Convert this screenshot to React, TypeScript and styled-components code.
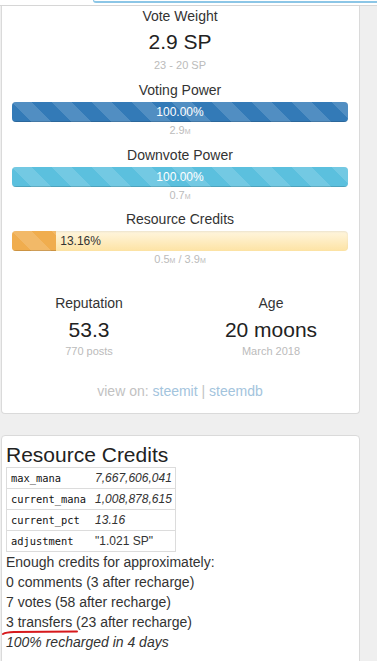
import styled, { createGlobalStyle } from 'styled-components';

const GlobalStyle = createGlobalStyle`
  html, body {
    margin: 0;
    padding: 0;
    background: #efefef;
  }
  body {
    font-family: "Liberation Sans", Arial, sans-serif;
    font-size: 14px;
    color: #333;
  }
`;

const Page = styled.div`
  width: 377px;
  height: 661px;
  overflow: hidden;
  background: #efefef;
`;

const TopStrip = styled.div`
  height: 5px;
  background: #fff;
  border-bottom: 1px solid #d6d6d6;
  display: flex;
  padding-left: 93px;
`;

const SearchEdge = styled.div`
  flex: 1;
  height: 1px;
  border-left: 1px solid #8cc6e6;
  border-bottom: 2px solid #8cc6e6;
  border-bottom-left-radius: 5px;
`;

const Card = styled.section<{ $cut?: boolean }>`
  box-sizing: border-box;
  width: 359px;
  margin-left: 1px;
  background: #fff;
  border: 1px solid #dadada;
  border-top: ${({ $cut }) => ($cut ? 'none' : '1px solid #dadada')};
  border-radius: ${({ $cut }) => ($cut ? '0 0 4px 4px' : '4px 4px 0 0')};
`;

const StatsCard = styled(Card)`
  padding: 0 11px 12px 10px;
  text-align: center;
`;

const Label = styled.div`
  font-size: 14px;
  line-height: 20px;
  color: #333;
`;

const BigValue = styled.div`
  margin-top: 3px;
  font-size: 21px;
  line-height: 26px;
  color: #222;
`;

const Sub = styled.div`
  height: 16px;
  font-size: 11px;
  line-height: 16px;
  color: #bbb;
`;

const Unit = styled.span`
  font-size: 7px;
  line-height: 1;
`;

const Gauge = styled.div<{ $gap: number }>`
  margin-top: ${({ $gap }) => $gap}px;
`;

const Track = styled.div<{ $bg: string }>`
  margin-top: 2px;
  height: 20px;
  border-radius: 4px;
  overflow: hidden;
  display: flex;
  align-items: center;
  background: ${({ $bg }) => $bg};
  box-shadow: inset 0 1px 2px rgba(0, 0, 0, 0.08);
`;

const Fill = styled.div<{ $color: string }>`
  height: 100%;
  flex-shrink: 0;
  display: flex;
  align-items: center;
  justify-content: center;
  background-color: ${({ $color }) => $color};
  background-image: linear-gradient(
    45deg,
    rgba(255, 255, 255, 0.15) 25%,
    transparent 25%,
    transparent 50%,
    rgba(255, 255, 255, 0.15) 50%,
    rgba(255, 255, 255, 0.15) 75%,
    transparent 75%,
    transparent
  );
  background-size: 40px 40px;
  box-shadow: inset 0 -1px 0 rgba(0, 0, 0, 0.15);
`;

const BarText = styled.span<{ $inside: boolean }>`
  font-size: 12px;
  line-height: 20px;
  color: ${({ $inside }) => ($inside ? '#fff' : '#333')};
  padding-left: ${({ $inside }) => ($inside ? '0' : '4px')};
`;

const Columns = styled.div`
  margin: 26px -14px 0;
  display: grid;
  grid-template-columns: 1fr 1fr;
`;

const Column = styled.div`
  text-align: center;
`;

const ColValue = styled(BigValue)`
  margin-top: 4px;
`;

const ViewOn = styled.div`
  margin-top: 22px;
  font-size: 14px;
  line-height: 20px;
  color: #c2c2c2;
`;

const Link = styled.a`
  color: #a3c4dd;
  text-decoration: none;
`;

const CreditsCard = styled(Card)`
  margin-top: 21px;
  padding: 0 4px 20px;
`;

const Heading = styled.h3`
  margin: 6px 0 0;
  font-size: 21px;
  font-weight: normal;
  line-height: 25px;
  color: #222;
`;

const ManaTable = styled.table`
  border-collapse: collapse;
  border: 1px solid #dcdcdc;
`;

const KeyCell = styled.td`
  height: 20px;
  padding: 0 5px 0 4px;
  border-top: 1px solid #dcdcdc;
  font-family: "DejaVu Sans Mono", "Liberation Mono", monospace;
  font-size: 10.4px;
  color: #111;
`;

const ValueCell = styled.td<{ $italic: boolean }>`
  height: 20px;
  padding: 0 3px 0 4px;
  border-top: 1px solid #dcdcdc;
  font-size: 12px;
  font-style: ${({ $italic }) => ($italic ? 'italic' : 'normal')};
  color: #333;
`;

const Line = styled.div<{ $italic?: boolean }>`
  font-size: 14px;
  line-height: 20px;
  color: #333;
  font-style: ${({ $italic }) => ($italic ? 'italic' : 'normal')};
`;

const Marked = styled.span`
  position: relative;
`;

const Scribble = styled.svg`
  position: absolute;
  left: -4px;
  top: 16px;
  width: 76px;
  height: 6px;
  overflow: visible;
`;

type BarProps = { pct: number; color: string; bg: string };

const Bar = ({ pct, color, bg }: BarProps) => {
  const inside = pct >= 50;
  const text = pct.toFixed(2) + '%';
  return (
    <Track $bg={bg}>
      <Fill $color={color} style={{ width: `${pct}%` }}>
        {inside && <BarText $inside>{text}</BarText>}
      </Fill>
      {!inside && <BarText $inside={false}>{text}</BarText>}
    </Track>
  );
};

const mana = [
  { key: 'max_mana', value: '7,667,606,041', italic: true },
  { key: 'current_mana', value: '1,008,878,615', italic: true },
  { key: 'current_pct', value: '13.16', italic: true },
  { key: 'adjustment', value: '"1.021 SP"', italic: false },
];

const App = () => {
  return (
    <Page>
      <GlobalStyle />
      <TopStrip>
        <SearchEdge />
      </TopStrip>

      <StatsCard $cut>
        <Label>Vote Weight</Label>
        <BigValue>2.9 SP</BigValue>
        <Sub style={{ marginTop: 2 }}>23 - 20 SP</Sub>

        <Gauge $gap={7}>
          <Label>Voting Power</Label>
          <Bar pct={100} color="#337ab7" bg="#f5f5f5" />
          <Sub>
            2.9<Unit>M</Unit>
          </Sub>
        </Gauge>

        <Gauge $gap={7}>
          <Label>Downvote Power</Label>
          <Bar pct={100} color="#5bc0de" bg="#f5f5f5" />
          <Sub>
            0.7<Unit>M</Unit>
          </Sub>
        </Gauge>

        <Gauge $gap={6}>
          <Label>Resource Credits</Label>
          <Bar
            pct={13.16}
            color="#f0ad4e"
            bg="linear-gradient(to bottom, #fff6df, #fde3a4)"
          />
          <Sub>
            0.5<Unit>M</Unit> / 3.9<Unit>M</Unit>
          </Sub>
        </Gauge>

        <Columns>
          <Column>
            <Label>Reputation</Label>
            <ColValue>53.3</ColValue>
            <Sub>770 posts</Sub>
          </Column>
          <Column>
            <Label>Age</Label>
            <ColValue>20 moons</ColValue>
            <Sub>March 2018</Sub>
          </Column>
        </Columns>

        <ViewOn>
          view on: <Link href="#">steemit</Link> | <Link href="#">steemdb</Link>
        </ViewOn>
      </StatsCard>

      <CreditsCard>
        <Heading>Resource Credits</Heading>
        <ManaTable>
          <tbody>
            {mana.map((row) => (
              <tr key={row.key}>
                <KeyCell>{row.key}</KeyCell>
                <ValueCell $italic={row.italic}>{row.value}</ValueCell>
              </tr>
            ))}
          </tbody>
        </ManaTable>
        <Line>Enough credits for approximately:</Line>
        <Line>0 comments (3 after recharge)</Line>
        <Line>7 votes (58 after recharge)</Line>
        <Line>
          <Marked>
            3 transfers{' '}
            <Scribble viewBox="0 0 76 6">
              <path
                d="M1 4 Q 4 2.2 12 2 L 75 1.6"
                fill="none"
                stroke="#d7191c"
                strokeWidth="2"
                strokeLinecap="round"
              />
            </Scribble>
          </Marked>
          (23 after recharge)
        </Line>
        <Line $italic>100% recharged in 4 days</Line>
      </CreditsCard>
    </Page>
  );
};

export default App;
